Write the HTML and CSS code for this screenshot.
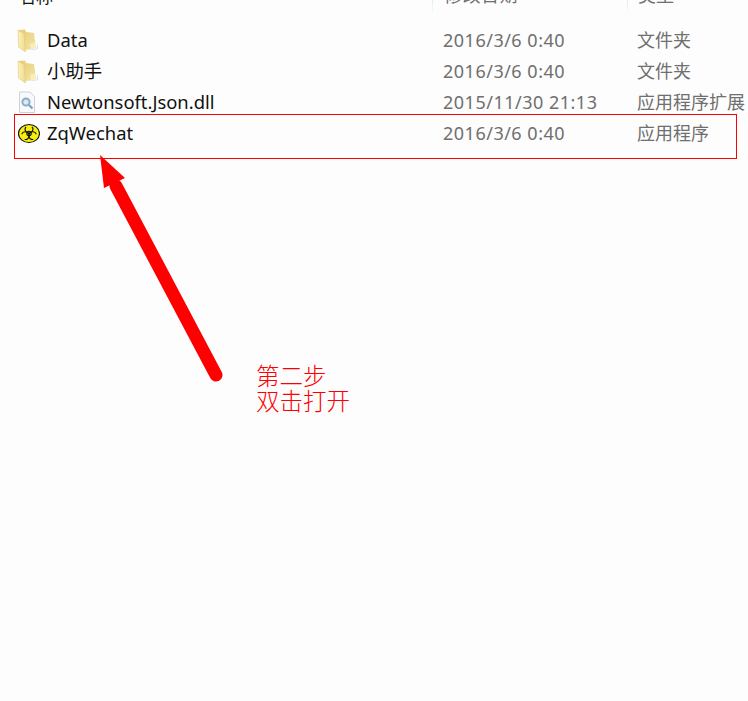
FILE: index.html
```html
<!DOCTYPE html>
<html lang="en">
<head>
    <meta charset="UTF-8">
    <title>ZqWechat</title>
    <link rel="stylesheet" href="styles.css">
</head>
<body>
    <svg class="defs" width="0" height="0">
        <defs>
            <linearGradient id="folderFront" x1="0" y1="0" x2="1" y2="0">
                <stop offset="0" stop-color="#fbf0b4"/>
                <stop offset="1" stop-color="#f1dc8e"/>
            </linearGradient>
            <linearGradient id="folderBack" x1="0" y1="0" x2="1" y2="1">
                <stop offset="0" stop-color="#e6cb78"/>
                <stop offset="1" stop-color="#f4e6a6"/>
            </linearGradient>
            <symbol id="folder" viewBox="0 0 23 23">
                <path d="M5 21 L21 20 L21 14 L19 21 Z" fill="#c9c9c9" opacity="0.6"/>
                <path d="M2 1 L8 0.5 L9 3 L17 4 L19 19 L9 21 L2 18 Z" fill="url(#folderBack)"/>
                <path d="M1 1 L7 4.5 L8.5 23 L1.5 18 Z" fill="url(#folderFront)" stroke="#dcc272" stroke-width="0.5"/>
                <path d="M13 15 L18 13.5 L19 19 L14 20.5 Z" fill="#f8eebb"/>
            </symbol>
        </defs>
    </svg>

    <div class="explorer">
        <div class="header">
            <div class="col-name"><span>名称</span></div>
            <div class="col-date"><span>修改日期</span></div>
            <div class="col-type"><span>类型</span></div>
        </div>

        <div class="files">
            <div class="row">
                <div class="col-name">
                    <svg class="icon"><use href="#folder"/></svg>
                    <span>Data</span>
                </div>
                <div class="col-date">2016/3/6 0:40</div>
                <div class="col-type">文件夹</div>
            </div>
            <div class="row">
                <div class="col-name">
                    <svg class="icon"><use href="#folder"/></svg>
                    <span>小助手</span>
                </div>
                <div class="col-date">2016/3/6 0:40</div>
                <div class="col-type">文件夹</div>
            </div>
            <div class="row">
                <div class="col-name">
                    <svg class="icon" viewBox="0 0 23 23">
                        <path d="M2.5 1 H13 L17.5 5.5 V21.5 H2.5 Z" fill="#f7f9fb" stroke="#c3c8ce" stroke-width="0.8"/>
                        <circle cx="9" cy="11" r="3.6" fill="#dce8f3" stroke="#8eacc9" stroke-width="2"/>
                        <path d="M12 14 L15.5 17.5" stroke="#7f9fc0" stroke-width="2.2"/>
                    </svg>
                    <span>Newtonsoft.Json.dll</span>
                </div>
                <div class="col-date">2015/11/30 21:13</div>
                <div class="col-type">应用程序扩展</div>
            </div>
            <div class="row">
                <div class="col-name">
                    <svg class="icon" viewBox="0 0 23 23">
                        <ellipse cx="12" cy="11.5" rx="10.5" ry="9" fill="#f7f00c" stroke="#111" stroke-width="1.1"/>
                        <g fill="none" stroke="#111" stroke-width="1.1">
                            <circle cx="12" cy="11.5" r="2.2"/>
                            <path d="M9 4.8 A3.8 3.8 0 1 0 15 4.8"/>
                            <path d="M9 4.8 A3.8 3.8 0 1 0 15 4.8" transform="rotate(120 12 11.5)"/>
                            <path d="M9 4.8 A3.8 3.8 0 1 0 15 4.8" transform="rotate(240 12 11.5)"/>
                        </g>
                    </svg>
                    <span>ZqWechat</span>
                </div>
                <div class="col-date">2016/3/6 0:40</div>
                <div class="col-type">应用程序</div>
            </div>
        </div>
    </div>

    <!-- annotations drawn over the screenshot -->
    <div class="highlight"></div>
    <svg class="arrow" viewBox="0 0 748 701">
        <path d="M216 375 L116 186" stroke="#ff0000" stroke-width="13" stroke-linecap="round" fill="none"/>
        <path d="M100 155 L125 178 L104 188 Z" fill="#ff0000"/>
    </svg>
    <div class="note">第二步<br>双击打开</div>
</body>
</html>
```

FILE: styles.css
```css
html, body {
    height: 100%;
}

body {
    margin: 0;
    background: #fdfdfd;
    overflow: hidden;
    position: relative;
    font-family: "Noto Sans", "Noto Sans CJK SC", sans-serif;
    font-size: 18.4px;
}

.defs {
    position: absolute;
}

.header,
.row {
    display: grid;
    grid-template-columns: 432px 195px 121px;
}

/* the column header is cut off by the top of the picture */
.header {
    height: 14px;
    overflow: hidden;
    color: #5f6b7c;
    font-size: 17px;
    line-height: 16px;
}

.header span {
    display: block;
    margin-top: -13px;
}

.header .col-name span {
    margin-top: -20px;
}

.header .col-name {
    padding-left: 19px;
}

.header .col-date,
.header .col-type {
    border-left: 1px solid;
    border-image: linear-gradient(#e4e9f0, #fdfdfd) 1;
}

.files {
    padding-top: 11px;
}

.row {
    height: 31px;
    align-items: center;
    line-height: 31px;
}

.col-name {
    display: flex;
    align-items: center;
    gap: 7px;
    padding-left: 17px;
    color: #111;
}

.row .col-name span {
    line-height: 27px;
    margin-bottom: 2px;
}

.col-date {
    padding-left: 11px;
    color: #6f6f6f;
    font-size: 18px;
    letter-spacing: 0.5px;
}

.col-type {
    padding-left: 10px;
    color: #6f6f6f;
    font-size: 18px;
    white-space: nowrap;
}

.icon {
    width: 23px;
    height: 23px;
    flex: none;
}

.highlight {
    position: absolute;
    left: 14px;
    top: 114px;
    width: 721px;
    height: 43px;
    border: 1px solid #ff0000;
}

.arrow {
    position: absolute;
    left: 0;
    top: 0;
    width: 748px;
    height: 701px;
}

.note {
    position: absolute;
    left: 256px;
    top: 363px;
    color: #ff0000;
    font-family: "Noto Sans CJK SC", sans-serif;
    font-size: 23.5px;
    font-weight: 300;
    line-height: 25px;
}
```
